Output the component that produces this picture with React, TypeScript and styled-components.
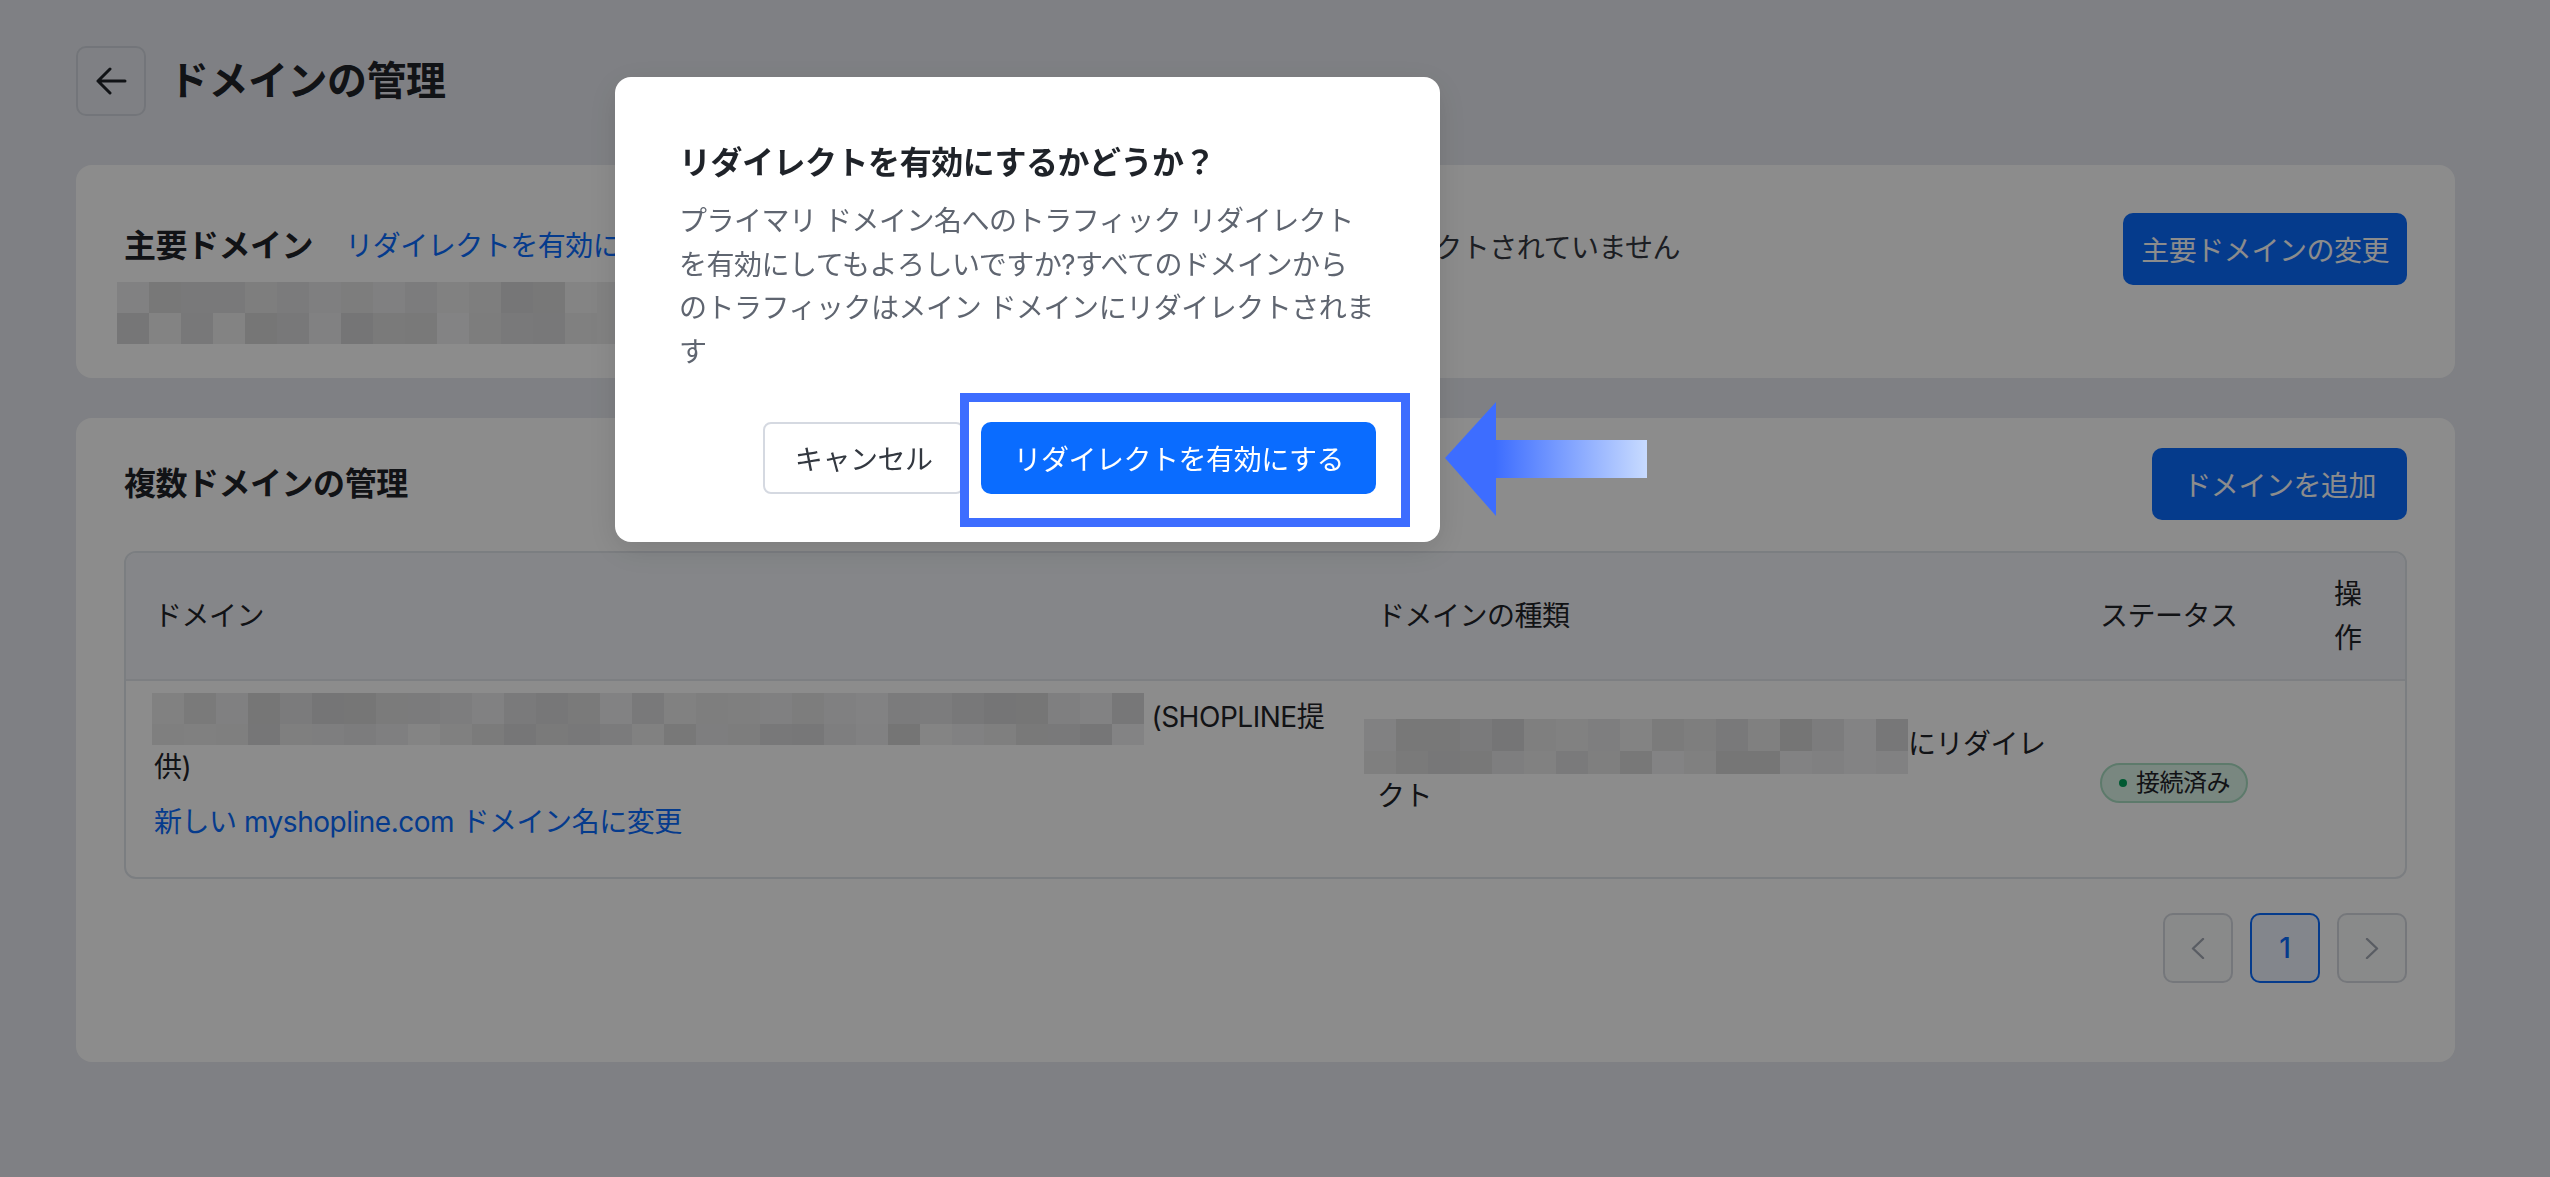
import styled, { createGlobalStyle } from "styled-components";

const GlobalStyle = createGlobalStyle`
  html, body {
    margin: 0;
    padding: 0;
  }
  body {
    background: #e8eaf0;
    color: #1f2329;
    font-family: "Inter", "Noto Sans CJK JP", "Noto Sans", sans-serif;
    letter-spacing: -0.03em;
    -webkit-font-smoothing: antialiased;
  }
  * {
    box-sizing: border-box;
  }
`;

const Page = styled.div`
  position: relative;
  min-height: 1177px;
  padding: 46px 95px 0 76px;
`;

const Header = styled.div`
  display: flex;
  align-items: center;
  gap: 23px;
`;

const BackButton = styled.button`
  width: 70px;
  height: 70px;
  display: flex;
  align-items: center;
  justify-content: center;
  border: 2px solid #d2d6de;
  border-radius: 10px;
  background: transparent;
  padding: 0;
`;

const PageTitle = styled.h1`
  margin: 0;
  font-size: 40px;
  font-weight: 600;
  line-height: 56px;
`;

const Card = styled.section<{ $pad: string; $top: number }>`
  margin-top: ${(p) => p.$top}px;
  padding: ${(p) => p.$pad};
  background: #fff;
  border-radius: 16px;
`;

const Row = styled.div<{ $align?: string }>`
  display: flex;
  justify-content: space-between;
  align-items: ${(p) => p.$align || "center"};
`;

const TitleLine = styled.div`
  display: flex;
  align-items: center;
  gap: 32px;
  height: 66px;
  white-space: nowrap;
`;

const SectionTitle = styled.h2`
  margin: 0;
  font-size: 32px;
  font-weight: 600;
  line-height: 44px;
`;

const TextLink = styled.a<{ $block?: boolean }>`
  display: ${(p) => (p.$block ? "block" : "inline")};
  margin-top: ${(p) => (p.$block ? "11px" : "0")};
  color: #0a6cff;
  font-size: 28px;
  line-height: 44px;
  text-decoration: none;
  cursor: pointer;
`;

const Muted = styled.span`
  margin-left: -16px;
  color: #333840;
  font-size: 28px;
`;

const PrimaryButton = styled.button<{ $px: number }>`
  height: 72px;
  padding: 0 ${(p) => p.$px}px;
  border: none;
  border-radius: 10px;
  background: #0a6cff;
  color: #fff;
  font: inherit;
  font-size: 28px;
  letter-spacing: inherit;
  white-space: nowrap;
  cursor: pointer;
`;

const MosaicGrid = styled.span<{ $cols: number; $rows: string; $shift: number }>`
  display: inline-grid;
  vertical-align: middle;
  margin-left: ${(p) => p.$shift}px;
  grid-template-columns: repeat(${(p) => p.$cols}, 32px);
  grid-template-rows: ${(p) => p.$rows};
`;

const MosaicCell = styled.span`
  display: block;
`;

const Blurred = styled.div`
  margin-top: 3px;
  margin-left: -7px;
  line-height: 0;
`;

const TableWrap = styled.div`
  margin-top: 31px;
  border: 2px solid #e1e5eb;
  border-radius: 12px;
  overflow: hidden;
`;

const Table = styled.table`
  width: 100%;
  border-collapse: separate;
  border-spacing: 0;
  table-layout: fixed;
`;

const Col = styled.col<{ $w?: number }>`
  width: ${(p) => (p.$w ? `${p.$w}px` : "auto")};
`;

const Th = styled.th`
  padding: 19px 28px;
  background: #f2f5f9;
  border-bottom: 2px solid #e4e7ed;
  color: #1f2329;
  font-size: 28px;
  font-weight: 400;
  line-height: 44px;
  text-align: left;
  vertical-align: middle;
`;

const Td = styled.td<{ $pt: number; $pb: number }>`
  padding: ${(p) => p.$pt}px 28px ${(p) => p.$pb}px;
  font-size: 28px;
  line-height: 44px;
  vertical-align: middle;
`;

const Line = styled.span`
  display: block;
  white-space: nowrap;
`;

const Badge = styled.span`
  display: inline-flex;
  align-items: center;
  gap: 9px;
  height: 40px;
  padding: 0 16px 0 17px;
  border: 2px solid #a9dfc3;
  border-radius: 20px;
  background: #dcf6e9;
  font-size: 24px;
  line-height: 1;
`;

const Dot = styled.span`
  width: 8px;
  height: 8px;
  border-radius: 50%;
  background: #00a35c;
`;

const Pagination = styled.div`
  display: flex;
  justify-content: flex-end;
  gap: 17px;
  margin-top: 34px;
`;

const PageButton = styled.button<{ $active?: boolean }>`
  width: 70px;
  height: 70px;
  display: flex;
  align-items: center;
  justify-content: center;
  padding: 0;
  border: 2px solid ${(p) => (p.$active ? "#0a6cff" : "#d5d9e0")};
  border-radius: 10px;
  background: ${(p) => (p.$active ? "#eef4ff" : "#fafbfc")};
  color: #0a6cff;
  font: inherit;
  font-size: 28px;
  font-weight: 500;
`;

const Overlay = styled.div`
  position: fixed;
  inset: 0;
  z-index: 10;
  background: rgba(0, 0, 0, 0.45);
`;

const Modal = styled.div`
  position: absolute;
  left: 615px;
  top: 77px;
  width: 825px;
  padding: 64px 64px 48px;
  background: #fff;
  border-radius: 16px;
  box-shadow: 0 8px 32px rgba(0, 0, 0, 0.12);
`;

const ModalTitle = styled.h3`
  margin: 0 0 15px;
  font-size: 32px;
  font-weight: 600;
  line-height: 44px;
`;

const ModalBody = styled.div`
  color: #5f6570;
  font-size: 28px;
  line-height: 43.5px;
`;

const ModalFooter = styled.div`
  display: flex;
  justify-content: flex-end;
  gap: 17px;
  margin-top: 48px;
`;

const CancelButton = styled.button`
  height: 72px;
  padding: 0 30px;
  border: 2px solid #d5d9e1;
  border-radius: 8px;
  background: #fff;
  color: #333840;
  font: inherit;
  font-size: 28px;
  letter-spacing: inherit;
  cursor: pointer;
`;

const Highlight = styled.div`
  position: absolute;
  left: 960px;
  top: 393px;
  width: 450px;
  height: 134px;
  border: 9px solid #3d6dff;
`;

const ArrowMark = styled.svg`
  position: absolute;
  left: 1445px;
  top: 402px;
`;

function shadeAt(seed: number, i: number) {
  const x = Math.sin(seed * 97.13 + i * 12.9898) * 43758.5453;
  return x - Math.floor(x);
}

function Mosaic({
  cols,
  rows,
  seed,
  shift = 0,
  lightTail = 0,
}: {
  cols: number;
  rows: number[];
  seed: number;
  shift?: number;
  lightTail?: number;
}) {
  const cells = [];
  for (let r = 0; r < rows.length; r++) {
    for (let c = 0; c < cols; c++) {
      const i = r * cols + c;
      const v =
        c >= cols - lightTail
          ? 236
          : Math.round(212 + shadeAt(seed, i) * 28);
      cells.push(
        <MosaicCell key={i} style={{ background: `rgb(${v},${v},${v + 1})` }} />
      );
    }
  }
  return (
    <MosaicGrid
      $cols={cols}
      $rows={rows.map((h) => `${h}px`).join(" ")}
      $shift={shift}
    >
      {cells}
    </MosaicGrid>
  );
}

function BackArrow() {
  return (
    <svg width="32" height="28" viewBox="0 0 32 28" fill="none">
      <path
        d="M30 14H3M15 2L3 14l12 12"
        stroke="#1f2329"
        strokeWidth="3"
        strokeLinecap="round"
        strokeLinejoin="round"
      />
    </svg>
  );
}

function Chevron({ dir }: { dir: "left" | "right" }) {
  const d = dir === "left" ? "M12 1L2 10.5 12 20" : "M2 1l10 9.5L2 20";
  return (
    <svg width="14" height="21" viewBox="0 0 14 21" fill="none">
      <path
        d={d}
        stroke="#a3a9b4"
        strokeWidth="2.4"
        strokeLinecap="round"
        strokeLinejoin="round"
      />
    </svg>
  );
}

export default function App() {
  return (
    <>
      <GlobalStyle />
      <Page>
        <Header>
          <BackButton>
            <BackArrow />
          </BackButton>
          <PageTitle>ドメインの管理</PageTitle>
        </Header>

        <Card $top={49} $pad="48px 48px 34px">
          <Row $align="flex-start">
            <div>
              <TitleLine>
                <SectionTitle>主要ドメイン</SectionTitle>
                <TextLink>リダイレクトを有効にする</TextLink>
                <Muted>
                  ドメインのトラフィックは、プライマリドメインにリダイレクトされていません
                </Muted>
              </TitleLine>
              <Blurred>
                <Mosaic cols={16} rows={[31, 31]} seed={3} lightTail={1} />
              </Blurred>
            </div>
            <PrimaryButton $px={18}>主要ドメインの変更</PrimaryButton>
          </Row>
        </Card>

        <Card $top={40} $pad="30px 48px 79px">
          <Row>
            <SectionTitle>複数ドメインの管理</SectionTitle>
            <PrimaryButton $px={31}>ドメインを追加</PrimaryButton>
          </Row>

          <TableWrap>
            <Table>
              <colgroup>
                <Col $w={1223} />
                <Col $w={723} />
                <Col $w={234} />
                <Col />
              </colgroup>
              <thead>
                <tr>
                  <Th>ドメイン</Th>
                  <Th>ドメインの種類</Th>
                  <Th>ステータス</Th>
                  <Th>操作</Th>
                </tr>
              </thead>
              <tbody>
                <tr>
                  <Td $pt={12} $pb={33}>
                    <Line>
                      <Mosaic cols={31} rows={[31, 21]} seed={7} shift={-2} />{" "}
                      (SHOPLINE提
                    </Line>
                    <Line>供)</Line>
                    <TextLink $block>新しい myshopline.com ドメイン名に変更</TextLink>
                  </Td>
                  <Td $pt={12} $pb={33}>
                    <Line>
                      <Mosaic cols={17} rows={[32, 23]} seed={11} shift={-13} />
                      にリダイレ
                    </Line>
                    <Line>クト</Line>
                  </Td>
                  <Td $pt={18} $pb={18}>
                    <Badge>
                      <Dot />
                      接続済み
                    </Badge>
                  </Td>
                  <Td $pt={18} $pb={18} />
                </tr>
              </tbody>
            </Table>
          </TableWrap>

          <Pagination>
            <PageButton>
              <Chevron dir="left" />
            </PageButton>
            <PageButton $active>1</PageButton>
            <PageButton>
              <Chevron dir="right" />
            </PageButton>
          </Pagination>
        </Card>
      </Page>

      <Overlay>
        <Modal>
          <ModalTitle>リダイレクトを有効にするかどうか？</ModalTitle>
          <ModalBody>
            プライマリ ドメイン名へのトラフィック リダイレクト
            <br />
            を有効にしてもよろしいですか?すべてのドメインから
            <br />
            のトラフィックはメイン ドメインにリダイレクトされま
            <br />す
          </ModalBody>
          <ModalFooter>
            <CancelButton>キャンセル</CancelButton>
            <PrimaryButton $px={32}>リダイレクトを有効にする</PrimaryButton>
          </ModalFooter>
        </Modal>
        <Highlight />
        <ArrowMark width="202" height="114" viewBox="0 0 202 114">
          <defs>
            <linearGradient id="shaft" x1="0" y1="0" x2="1" y2="0">
              <stop offset="0" stopColor="#3d6dff" />
              <stop offset="1" stopColor="#c8dbff" />
            </linearGradient>
          </defs>
          <polygon points="0,56 51,0 51,114" fill="#3d6dff" />
          <rect x="50" y="38" width="152" height="38" fill="url(#shaft)" />
        </ArrowMark>
      </Overlay>
    </>
  );
}
